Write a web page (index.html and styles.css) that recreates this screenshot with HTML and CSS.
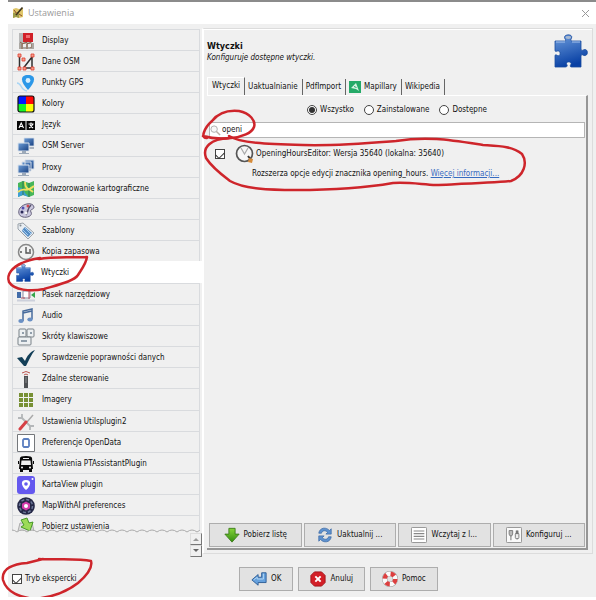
FILE: index.html
```html
<!DOCTYPE html>
<html lang="pl">
<head>
<meta charset="utf-8">
<title>Ustawienia</title>
<link rel="stylesheet" href="styles.css">
</head>
<body>
<svg class="defs" aria-hidden="true">
  <defs>
    <linearGradient id="blue" x1="0" y1="0" x2="0.3" y2="1"><stop offset="0" stop-color="#6d9cdc"/><stop offset="1" stop-color="#0840a4"/></linearGradient>
    <linearGradient id="screen" x1="0" y1="0" x2="1" y2="1"><stop offset="0" stop-color="#6f9fd8"/><stop offset="1" stop-color="#173f80"/></linearGradient>
    <linearGradient id="green" x1="0" y1="0" x2="0" y2="1"><stop offset="0" stop-color="#86d43a"/><stop offset="1" stop-color="#348d10"/></linearGradient>
    <symbol id="puzzle" viewBox="0 0 34 34"><path d="M1 7h9.500c2 0 1-1.500.3-2.500C8.500 0 19.500-.5 17.500 4c-.7 1.500-1.500 3 .5 3H27v8c0 2 1.500 1.500 3 .7 4.500-1.500 4.500 7 0 5.800-1.500-.8-3-1.500-3 .5v11H17.500c-1.500 0-1.500-1.500-.7-2.500 2-3.500-6-3.500-4 0 .8 1 .5 2.500-1.300 2.500H1V22c0-2 1.500-1 2.500-.5 3.500 1.500 3.500-5.500 0-4.500C2 17.500 1 18 1 16z" fill="url(#blue)" stroke="#1b4c9e" stroke-width=".8"/><path d="M2 8h9M18 8h8" fill="none" stroke="#a7c4ee"/><ellipse cx="14.300" cy="3.500" rx="2.800" ry="1.400" fill="#a9b9d0"/></symbol>
    <symbol id="monitors" viewBox="0 0 18 18"><path d="M7 1h10v8H7z" fill="url(#screen)" stroke="#d4dde8" stroke-width=".8"/><path d="M12 10h5v2h-5z" fill="#aab3bf"/><path d="M1 6h11v8H1z" fill="url(#screen)" stroke="#dbe3ec"/><path d="M5 14h4v2H5zM2 16h10v1H2z" fill="#9daab9"/></symbol>
    <symbol id="arrow-down" viewBox="0 0 18 18"><path d="M5.500 1.500h7V8H17l-8 9-8-9h4.500z" fill="url(#green)" stroke="#397b19"/></symbol>
  </defs>
</svg>

<div class="window">
  <header class="titlebar">
    <svg class="app-icon" viewBox="0 0 12 12"><path d="M1 2l3-1 3 1 4-1v9l-4 1-3-1-3 1z" fill="#dfc66a"/><path d="M1 6l6-1v6l-3-1-3 1z" fill="#9f9d4a"/><path d="M10.500.5L4 8" stroke="#3d3420" stroke-width="1.600"/><path d="M2 3l3 4M7 7l3 2" stroke="#8c4c29"/></svg>
    <span>Ustawienia</span>
    <button class="close" type="button" aria-label="Zamknij"><svg viewBox="0 0 9 9"><path d="M1 1l7 7M8 1L1 8" stroke="#999" fill="none"/></svg></button>
  </header>

  <div class="content">
    <nav class="sidebar" aria-label="Kategorie">
      <div class="categories">
        <button type="button" class="category"><svg viewBox="0 0 18 18"><path d="M2 1h13v10H2z" fill="#b8b8b8"/><path d="M6 1h10v9H6z" fill="#d12028"/><path d="M9 3h4v3H9z" fill="#ee6d70"/><path d="M2 11h15v6H2z" fill="#aba7a2"/><path d="M3 10l3 2 3-2 2 2 3-2M5 12v5M10 12v5M14 12v4" stroke="#8d6249" fill="none"/><path d="M6 12h3v3H6zM11 12h3v3h-3z" fill="#eee"/></svg>Display</button>
        <button type="button" class="category"><svg viewBox="0 0 18 18"><path d="M2.500 2v14M6.500 15L15 4v11H7" fill="none" stroke="#303030" stroke-width="1.500"/><path d="M1 1h3v3H1zM1 14h3v3H1zM5 5h3v3H5zM14 1h3v3h-3zM14 14h3v3h-3zM6 14h3v3H6z" fill="#f3a08f" stroke="#df3c2e" stroke-width=".8"/></svg>Dane OSM</button>
        <button type="button" class="category"><svg viewBox="0 0 18 18"><path d="M0 9c5 0 3 7 10 8" fill="none" stroke="#a8d5f5" stroke-width="1.500"/><path d="M11 1c9 0 7 8 0 15C4 9 2 1 11 1z" fill="#2c98e8"/><circle cx="11" cy="6.500" r="2.400" fill="#d7efff"/></svg>Punkty GPS</button>
        <button type="button" class="category"><svg viewBox="0 0 18 18"><path d="M1 1h8v8H1z" fill="#0018ff"/><path d="M9 1h8v8H9z" fill="#ff0808"/><path d="M1 9h8v8H1z" fill="#16f528"/><path d="M9 9h8v8H9z" fill="#ffff05"/><rect x="1" y="1" width="16" height="16" rx="2" fill="none" stroke="#111" stroke-width="1.200"/></svg>Kolory</button>
        <button type="button" class="category"><svg viewBox="0 0 18 18"><path d="M0 5h8.500v9H0zM9.500 5H18v9H9.500z" fill="#080808"/><path d="M2 12l2.200-5 2.300 5M3 10.500h3M11.500 8h5M14 6.500V8M16 8c-1 2-2 3-4 4M13 9l3 3" fill="none" stroke="#fff" stroke-width="1.100"/></svg>Język</button>
        <button type="button" class="category"><svg><use href="#monitors"/></svg>OSM Server</button>
        <button type="button" class="category"><svg viewBox="0 0 18 18"><path d="M8 1h9v9H8zM5 3h9v9H5z" fill="url(#screen)" stroke="#d4dde8"/><path d="M1 6h11v8H1z" fill="url(#screen)" stroke="#dbe3ec"/><path d="M5 14h4v2H5zM1 16h11v1H1z" fill="#9daab9"/></svg>Proxy</button>
        <button type="button" class="category"><svg viewBox="0 0 18 18"><path d="M1 3l5-2 6 2 5-2v14l-5 2-6-2-5 2z" fill="#47b65a"/><path d="M1 7l5 2 2 4 4 4-6-2-5 2z" fill="#3d9ed6"/><path d="M6 1v14M12 3v14" stroke="#2f7b51"/><path d="M1 12c6-6 7 2 16-6M8 2c0 8 5 7 8 10" fill="none" stroke="#f0df61" stroke-width="1.800"/></svg>Odwzorowanie kartograficzne</button>
        <button type="button" class="category"><svg viewBox="0 0 18 18"><path d="M3 7c4-5 13-6 14-1 0 3-5 2-3 5 2 4-4 6-8 5-5-1-5-6-3-9z" fill="#cbc8df" stroke="#65617b"/><circle cx="6" cy="7" r="1.500" fill="#514eb0"/><circle cx="11" cy="5" r="1.500" fill="#d24a50"/><circle cx="5" cy="11" r="1.500" fill="#292858"/><path d="M9 14c3-5 1-6 5-10" fill="none" stroke="#58536d" stroke-width="1.500"/><circle cx="9" cy="12" r="1.500" fill="#f5f5f5"/></svg>Style rysowania</button>
        <button type="button" class="category"><svg viewBox="0 0 18 18"><path d="M1 2l5-1 11 10-6 6L1 7z" fill="#e8edf2" stroke="#9aa2aa"/><path d="M6 7l2-2 7 6-4 4-6-6z" fill="#548cc4"/><path d="M8 6l6 6M6 8l5 5" stroke="#a7cbed"/><circle cx="3.500" cy="3.500" r="1" fill="#828a92"/></svg>Szablony</button>
        <button type="button" class="category"><svg viewBox="0 0 18 18"><circle cx="9" cy="9" r="7.500" fill="#f2f2f2" stroke="#888" stroke-width="1.500"/><path d="M9 4v6h5M3 9h2M13 6v3" fill="none" stroke="#555" stroke-width="1.400"/></svg>Kopia zapasowa</button>
        <button type="button" class="category selected" aria-current="page"><svg><use href="#puzzle"/></svg>Wtyczki</button>
        <button type="button" class="category"><svg viewBox="0 0 18 18"><path d="M0 6h4v6H0z" fill="#426ca9"/><path d="M6 5h7v7H6z" fill="#fff" stroke="#8b8fa5"/><path d="M4 12h4M12 5v8" stroke="#b65462"/><path d="M18 6v6l-4-3z" fill="#35a44b"/><path d="M0 14.500h18" stroke="#ccd0db" stroke-width="2"/></svg>Pasek narzędziowy</button>
        <button type="button" class="category"><svg viewBox="0 0 18 18"><path d="M6 14V4l9-2v10M6 6l9-2" fill="none" stroke="#476b9c" stroke-width="1.500"/><ellipse cx="4" cy="14" rx="2.700" ry="1.900" fill="#6a90c4"/><ellipse cx="13" cy="12.500" rx="2.700" ry="1.900" fill="#6a90c4"/></svg>Audio</button>
        <button type="button" class="category"><svg viewBox="0 0 18 18"><g fill="#edf0f2" stroke="#788187"><rect x="2" y="1" width="7" height="8" rx="1"/><rect x="10" y="1" width="7" height="8" rx="1"/><rect x="1" y="9" width="13" height="8" rx="1"/></g><path d="M5 5h2M13 5h2M4 13h6" stroke="#718294" stroke-width="1.500"/></svg>Skróty klawiszowe</button>
        <button type="button" class="category"><svg viewBox="0 0 18 18"><path d="M0 9l5-1 3 4c2-5 5-9 10-11-4 5-6 10-9 16H7z" fill="#133f58"/></svg>Sprawdzenie poprawności danych</button>
        <button type="button" class="category"><svg viewBox="0 0 18 18"><path d="M5 3q4-3 8 0M7 5q2-2 4 0" fill="none" stroke="#bd5750"/><rect x="7" y="6" width="4" height="12" fill="#4e5053"/><path d="M8.500 8h1M8.500 10h1M8.500 12h1" stroke="#ccc"/></svg>Zdalne sterowanie</button>
        <button type="button" class="category"><svg viewBox="0 0 18 18"><path d="M2 2h4v4H2zM7 2h4v4H7zM12 2h4v4h-4zM2 7h4v4H2zM7 7h4v4H7zM12 7h4v4h-4zM2 12h4v4H2zM7 12h4v4H7zM12 12h4v4h-4z" fill="#789034"/></svg>Imagery</button>
        <button type="button" class="category"><svg viewBox="0 0 18 18"><path d="M4 4l10 10" stroke="#b4b7b9" stroke-width="2"/><path d="M5 1v4H1M13 17v-4h4" fill="none" stroke="#b4b7b9" stroke-width="1.800"/><path d="M16 2l-6 7" stroke="#aaa" stroke-width="1.500"/><path d="M9 9l-6 7" stroke="#d64146" stroke-width="3" stroke-linecap="round"/></svg>Ustawienia Utilsplugin2</button>
        <button type="button" class="category"><svg viewBox="0 0 18 18"><path d="M.5.500h17v17H.5z" fill="#fff" stroke="#74777b"/><path d="M7 5h4l1 1v6l-1 1H7l-1-1V6z" fill="none" stroke="#5c7fc0" stroke-width="1.800"/></svg>Preferencje OpenData</button>
        <button type="button" class="category"><svg viewBox="0 0 18 18"><path d="M3 3q0-2 6-2t6 2l1 11h-1v3h-3v-2H6v2H3v-3H2z" fill="#080808"/><path d="M4.500 5.500h9l.5 4.500H4zM6 3h6v1H6z" fill="#f0f0f0"/><circle cx="5" cy="12.500" r="1" fill="#fff"/><circle cx="13" cy="12.500" r="1" fill="#fff"/><path d="M1.500 6v3M16.500 6v3" stroke="#080808"/></svg>Ustawienia PTAssistantPlugin</button>
        <button type="button" class="category"><svg viewBox="0 0 18 18"><rect width="18" height="18" rx="3" fill="#6559ef"/><path d="M9 4c6 0 5 6 0 10C4 10 3 4 9 4z" fill="#fff"/><circle cx="9" cy="8" r="1.800" fill="#6559ef"/><circle cx="15.500" cy="3" r="1" fill="#fff"/></svg>KartaView plugin</button>
        <button type="button" class="category"><svg viewBox="0 0 18 18"><circle cx="9" cy="9" r="8.800" fill="#252847"/><circle cx="9" cy="9" r="6.500" fill="none" stroke="#6d7899" stroke-width="1.500" stroke-dasharray="3 2"/><path d="M9 4.500l4 2.300v4.400l-4 2.300-4-2.300V6.800z" fill="#d23aab"/><circle cx="9" cy="9" r="2" fill="#fff"/></svg>MapWithAI preferences</button>
        <button type="button" class="category cut"><svg viewBox="0 0 18 18"><path d="M3 6h12l3 12H0z" fill="#ddd" stroke="#aaa"/><path d="M4 3l6-2 2 5 4-1-3 9-9-4 3-2z" fill="#9cdb57" stroke="#489929"/></svg>Pobierz ustawienia</button>
      </div>
      <svg class="torn" aria-hidden="true"><defs><pattern id="wave" width="10" height="4" patternUnits="userSpaceOnUse"><path d="M0 1q2.500 0 5 2 2.500-2 5-2" fill="none" stroke="#aaa"/></pattern></defs><rect width="100%" height="4" fill="url(#wave)"/></svg>
      <div class="scrollers">
        <button type="button" aria-label="W górę"><svg viewBox="0 0 6 4"><path d="M0 4l3-3 3 3z" fill="#999"/></svg></button>
        <button type="button" aria-label="W dół"><svg viewBox="0 0 6 4"><path d="M0 0l3 3 3-3z" fill="#666"/></svg></button>
      </div>
    </nav>

    <main class="panel">
      <div class="heading">
        <div><h1>Wtyczki</h1><p>Konfiguruje dostępne wtyczki.</p></div>
        <svg class="heading-icon"><use href="#puzzle"/></svg>
      </div>
      <div class="tabs" role="tablist">
        <button type="button" role="tab" aria-selected="true" class="tab active">Wtyczki</button>
        <button type="button" role="tab" class="tab">Uaktualnianie</button>
        <button type="button" role="tab" class="tab">PdfImport</button>
        <button type="button" role="tab" class="tab"><svg viewBox="0 0 12 12"><path d="M0 0h12v12H0z" fill="#25aa68"/><path d="M2 7l5-5 3 8-3-2z" fill="#d9f3e5"/><path d="M5 5.500l2.500 1" stroke="#25aa68"/></svg>Mapillary</button>
        <button type="button" role="tab" class="tab">Wikipedia</button>
      </div>
      <section class="pane" role="tabpanel">
        <div class="filters">
          <label><input type="radio" name="filter" checked>Wszystko</label>
          <label><input type="radio" name="filter">Zainstalowane</label>
          <label><input type="radio" name="filter">Dostępne</label>
        </div>
        <div class="search">
          <svg viewBox="0 0 12 12"><circle cx="4.500" cy="4.500" r="3.500" fill="#f8f8f8" stroke="#aaa"/><path d="M7 7l4 4" stroke="#bcaea5" stroke-width="1.600"/></svg>
          <input type="text" value="openi" aria-label="Szukaj">
        </div>
        <div class="plugin">
          <input type="checkbox" id="plugin" checked>
          <svg viewBox="0 0 20 20"><circle cx="9.500" cy="9.500" r="8" fill="#f7f7f7" stroke="#555" stroke-width="1.700"/><path d="M6 4l3.500 6L13 4" fill="none" stroke="#aaa" stroke-width="1.200"/><path d="M13 12l3 4" stroke="#3b3937" stroke-width="2"/><path d="M14 14l4 1-1 4-4-1z" fill="#d68b39"/></svg>
          <label for="plugin">OpeningHoursEditor: Wersja 35640 (lokalna: 35640)</label>
        </div>
        <p class="description">Rozszerza opcje edycji znacznika opening_hours. <a href="#">Więcej informacji...</a></p>
        <div class="toolbar">
          <button type="button"><svg><use href="#arrow-down"/></svg>Pobierz listę</button>
          <button type="button"><svg viewBox="0 0 18 18"><path d="M2 7c1-7 9-7 12-3l2-2v6h-6l2-2C9 3 6 4 5 7zM16 11c-1 7-9 7-12 3l-2 2v-6h6l-2 2c3 3 6 2 7-1z" fill="#5e91ce" stroke="#3867a4" stroke-width=".8"/></svg>Uaktualnij ...</button>
          <button type="button"><svg viewBox="0 0 18 18"><rect x=".5" y=".5" width="17" height="17" rx="1" fill="#fff" stroke="#888"/><path d="M3 4.500h12M3 7.500h12M3 10.500h12M3 13.500h12" stroke="#888" stroke-width="1.300"/></svg>Wczytaj z l...</button>
          <button type="button"><svg viewBox="0 0 18 18"><rect x=".5" y=".5" width="17" height="17" rx="1" fill="#fafafa" stroke="#888"/><path d="M5.500 4v11M12.500 4v10" stroke="#999" stroke-width="1.500"/><path d="M3.500 4h4v4l-1 2h-2l-1-2z" fill="#bbb" stroke="#777"/><rect x="10.500" y="7" width="4" height="6" rx="1" fill="#eee" stroke="#777"/><path d="M11 4h3v4h-3z" fill="#777"/></svg>Konfiguruj ...</button>
        </div>
      </section>
    </main>
  </div>

  <footer class="footer">
    <label class="expert"><input type="checkbox" checked>Tryb ekspercki</label>
    <button type="button"><svg viewBox="0 0 18 18"><path d="M1 10l7-6v3h4V2h5v11H8v3z" fill="#66a1dd" stroke="#285893"/><path d="M3 10l4-3v2h7V3" fill="none" stroke="#b9daf3"/></svg>OK</button>
    <button type="button"><svg viewBox="0 0 18 18"><path d="M5 1h8l4 4v8l-4 4H5l-4-4V5z" fill="#d31f27" stroke="#9e1117"/><path d="M6 6l6 6M12 6l-6 6" stroke="#fff" stroke-width="2.200"/></svg>Anuluj</button>
    <button type="button"><svg viewBox="0 0 18 18"><circle cx="9" cy="9" r="6" fill="none" stroke="#999" stroke-width="6"/><circle cx="9" cy="9" r="6" fill="none" stroke="#fafafa" stroke-width="5"/><circle cx="9" cy="9" r="6" fill="none" stroke="#dc3f3f" stroke-width="5" stroke-dasharray="4.712 4.712"/></svg>Pomoc</button>
  </footer>
</div>

<svg class="marks" viewBox="0 0 596 600" aria-hidden="true">
  <path d="M39 259C54 256 73 258 87 257C86 264 81 270 78 275C74 281 61 284 44 289C30 292 14 290 9 282C6 274 13 267 22 263C28 260 34 259 40 258"/>
  <path d="M39 559C58 560 78 558 91 561C93 568 85 577 78 583C69 590 56 597 34 599C20 597 7 593 3 580C1 568 14 564 27 563L43 559"/>
  <path d="M207 138C200 139 204 128 212 121C219 112 229 110 239 111C250 113 256 121 254 127C252 133 242 137 231 138C222 139 213 139 203 136"/>
  <path d="M229 136C240 143 266 144 303 145C338 146 371 143 396 141C428 136 450 140 483 145C499 146 512 146 522 154C528 163 524 176 511 181C492 183 459 184 436 185C419 184 407 182 393 183C370 187 338 190 296 190C269 190 244 189 230 181C222 175 211 166 206 158C202 147 211 139 229 138"/>
</svg>
</body>
</html>
```
FILE: styles.css
```css
* {
  box-sizing: border-box;
}

body {
  margin: 0;
  position: relative;
  background: #fff;
  color: #111;
  font: 8px/12px "DejaVu Sans Condensed", Tahoma, sans-serif;
}

button,
input {
  margin: 0;
  font: inherit;
  color: inherit;
}

h1,
p {
  margin: 0;
}

svg {
  display: block;
  flex: none;
}

.defs {
  position: absolute;
  width: 0;
  height: 0;
}

.window {
  margin-left: 8px;
  background: #f0f0f0;
  border-top: 2px solid #8b8b8b;
}

.titlebar {
  display: flex;
  align-items: center;
  gap: 4px;
  height: 22px;
  padding: 0 4px;
  background: #fff;
  color: #999;
  font: 9px/12px "Open Sans", sans-serif;
}

.app-icon {
  width: 12px;
  height: 12px;
}

.close {
  margin-left: auto;
  padding: 2px;
  border: 0;
  background: none;
}

.close svg {
  width: 9px;
  height: 9px;
}

.content {
  display: flex;
  padding: 4px 3px 0 0;
}

.sidebar {
  flex: none;
  width: 194px;
  padding-top: 1px;
}

.category {
  display: flex;
  align-items: center;
  gap: 7px;
  width: 188px;
  height: 21px;
  margin-left: 4px;
  padding: 1px 4px 0;
  border: solid #d9dbde;
  border-width: 1px 1px 0;
  background: #f0f0f0;
  line-height: 14px;
  text-align: left;
  white-space: nowrap;
}

.category:nth-child(6n) {
  height: 22px;
}

.category svg {
  width: 18px;
  height: 18px;
}

.category.selected {
  width: 194px;
  margin-left: 0;
  padding: 0 7px;
  border-color: #fff;
  background: #fff;
}

.category.cut {
  height: 16px;
  align-items: flex-start;
  overflow: hidden;
  line-height: 19px;
}

.torn {
  width: 188px;
  height: 4px;
  margin: -2px 0 0 4px;
}

.scrollers {
  display: flex;
  flex-direction: column;
  align-items: flex-end;
}

.scrollers button {
  display: grid;
  place-items: center;
  width: 12px;
  height: 12px;
  padding: 0;
  border: 1px solid #ddd;
  border-right-color: #777;
  border-bottom-color: #777;
  background: #f0f0f0;
}

.scrollers svg {
  width: 6px;
  height: 4px;
}

.panel {
  display: flex;
  flex: 1;
  flex-direction: column;
  margin-bottom: 3px;
  padding: 5px 4px 3px 3px;
  border: 1px solid #dcdcdc;
  border-left: 2px solid #fff;
  box-shadow: inset 0 1px #fff;
}

.heading {
  display: flex;
  justify-content: space-between;
  height: 43px;
}

.heading > div {
  padding-top: 7px;
}

.heading h1 {
  font-size: 9px;
  line-height: 11px;
}

.heading p {
  font-style: italic;
  line-height: 11px;
}

.heading-icon {
  width: 34px;
  height: 34px;
}

.tabs {
  display: flex;
  align-items: flex-end;
  height: 18px;
}

.tab {
  display: flex;
  align-items: center;
  gap: 3px;
  height: 16px;
  padding: 0 4px 0 3px;
  border: 0;
  border-right: 1px solid #666;
  background: none;
}

.tab svg {
  width: 12px;
  height: 12px;
}

.tab.active {
  height: 18px;
  padding: 0 4px 1px;
  border-left: 1px solid #fff;
  border-top: 1px solid #fff;
}

.pane {
  display: flex;
  flex: 1;
  flex-direction: column;
  padding: 8px 1px 1px 2px;
  border: 2px solid #969696;
  border-top: 1px solid #fff;
  border-left: 0;
}

.filters {
  display: flex;
  justify-content: center;
  gap: 10px;
}

.filters label,
.expert {
  display: flex;
  align-items: center;
  gap: 3px;
}

input[type="radio"],
input[type="checkbox"] {
  appearance: none;
  display: grid;
  place-items: center;
  flex: none;
  width: 10px;
  height: 10px;
  border: 1px solid #444;
  background: #fff;
}

input[type="radio"] {
  border-radius: 50%;
}

input[type="radio"]:checked::before {
  width: 6px;
  height: 6px;
  border-radius: 50%;
  background: #333;
  content: "";
}

input[type="checkbox"]:checked::before {
  width: 7px;
  height: 4px;
  border: solid #333;
  border-width: 0 0 1px 1px;
  transform: rotate(-45deg);
  content: "";
}

.search {
  display: flex;
  align-items: center;
  gap: 1px;
  height: 16px;
  margin-top: 6px;
  border: 1px solid #b5b5b5;
  background: #fff;
}

.search svg {
  width: 11px;
  height: 11px;
}

.search input {
  flex: 1;
  min-width: 0;
  padding: 0;
  border: 0;
  outline: 0;
  background: none;
}

.plugin {
  display: flex;
  align-items: center;
  height: 20px;
  margin-top: 6px;
  padding-left: 6px;
}

.plugin svg {
  width: 20px;
  height: 20px;
  margin: 0 1px 0 10px;
}

.description {
  margin: 4px 0 0 43px;
}

.description a {
  color: #376bc0;
}

.toolbar {
  display: grid;
  grid-template-columns: repeat(4, 1fr);
  gap: 2px;
  margin-top: auto;
}

.toolbar button,
.footer button {
  display: flex;
  align-items: center;
  justify-content: center;
  gap: 4px;
  height: 24px;
  padding: 0;
  border: 1px solid #adadad;
  background: #e2e2e2;
  white-space: nowrap;
}

.toolbar svg,
.footer svg {
  width: 16px;
  height: 16px;
}

.footer {
  display: flex;
  align-items: center;
  gap: 5px;
  padding: 10px 4px 6px;
}

.footer button {
  padding: 0 11px;
}

.expert {
  width: 222px;
}

.marks {
  position: absolute;
  top: 0;
  left: 0;
  width: 596px;
  height: 600px;
  pointer-events: none;
}

.marks path {
  fill: none;
  stroke: #ce252b;
  stroke-width: 2.5;
  stroke-linecap: round;
  stroke-linejoin: round;
}
```
